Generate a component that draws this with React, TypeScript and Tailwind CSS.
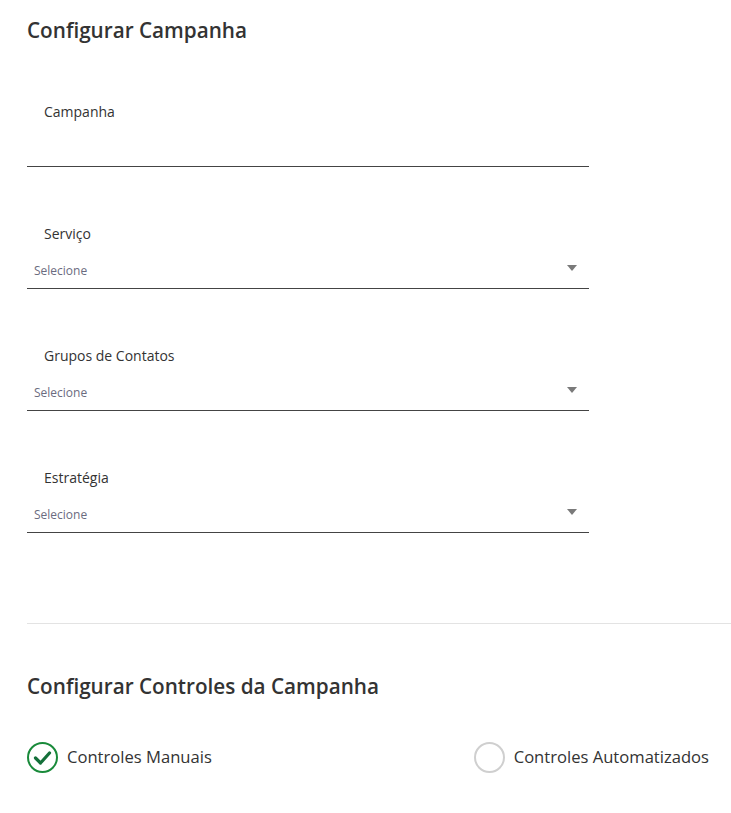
import React from "react";

const font = { fontFamily: '"Open Sans", "Noto Sans", sans-serif' };

function Caret () {
  return (
    <svg width="10" height="6" viewBox="0 0 10 6" className="mr-[12px] mb-[7px]">
      <path d="M0 0 L10 0 L5 6 Z" fill="#7a7a7a" />
    </svg>
  );
}

function TextField ({ label }: { label: string }) {
  return (
    <div className="w-[562px] flex flex-col">
      <p className="text-[14px] leading-[20px] text-[#333] pl-[17px]">{label}</p>
      <div className="h-[45px] border-b border-[#444]" />
    </div>
  );
}

function SelectField ({ label }: { label: string }) {
  return (
    <div className="w-[562px] flex flex-col">
      <p className="text-[14px] leading-[20px] text-[#333] pl-[17px]">{label}</p>
      <div className="h-[45px] flex items-center justify-between border-b border-[#444] pl-[7px] pt-[10px]">
        <span className="text-[12px] text-[#6b6b80]">Selecione</span>
        <Caret />
      </div>
    </div>
  );
}

function App () {
  return (
    <div className="w-[731px] h-[813px] bg-white text-[#333]" style={font}>
      <div className="pl-[27px] pt-[16px]">
        <h1 className="text-[20.7px] leading-[28px] font-semibold text-[#333]">Configurar Campanha</h1>
        <div className="flex flex-col gap-[57px] mt-[58px]">
          <TextField label="Campanha" />
          <SelectField label="Serviço" />
          <SelectField label="Grupos de Contatos" />
          <SelectField label="Estratégia" />
        </div>
        <div className="mt-[90px] border-t border-[#e3e3e3]" />
        <h2 className="mt-[48px] text-[20.7px] leading-[28px] font-semibold text-[#333]">Configurar Controles da Campanha</h2>
        <div className="mt-[42px] flex items-center justify-between pr-[22px]">
          <div className="flex items-center gap-[9px]">
            <svg width="31" height="31" viewBox="0 0 31 31">
              <circle cx="15.5" cy="15.5" r="14.5" fill="none" stroke="#198a3a" strokeWidth="2" />
              <path d="M8.5 16 L13.5 21 L22.5 11" fill="none" stroke="#14703a" strokeWidth="3.2" strokeLinecap="round" strokeLinejoin="round" />
            </svg>
            <span className="text-[16.6px] text-[#333]">Controles Manuais</span>
          </div>
          <div className="flex items-center gap-[9px]">
            <span className="w-[31px] h-[31px] rounded-full border-2 border-[#cfcfcf]" />
            <span className="text-[16.6px] text-[#333]">Controles Automatizados</span>
          </div>
        </div>
      </div>
    </div>
  );
}

export default App;
